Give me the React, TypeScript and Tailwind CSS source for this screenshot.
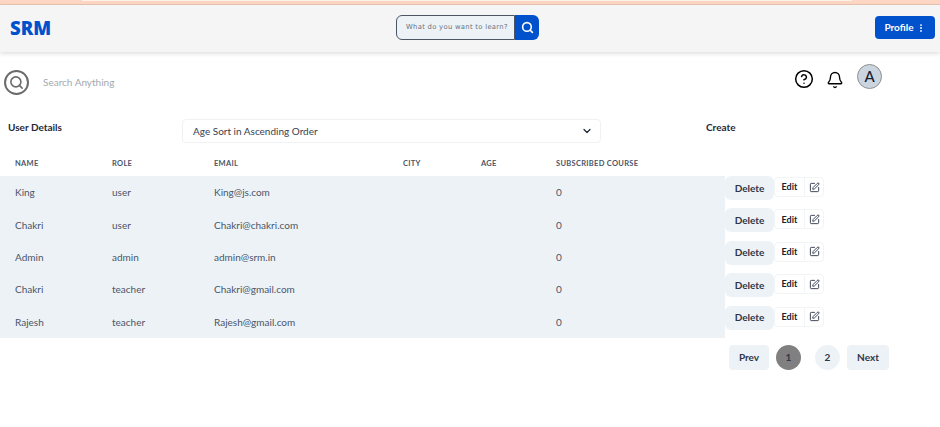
import React from "react";
import { ChevronDown, EllipsisVertical, Search, Bell, CircleHelp, SquarePen } from "lucide-react";

const users = [
    { name: "King", role: "user", email: "King@js.com" },
    { name: "Chakri", role: "user", email: "Chakri@chakri.com" },
    { name: "Admin", role: "admin", email: "admin@srm.in" },
    { name: "Chakri", role: "teacher", email: "Chakri@gmail.com" },
    { name: "Rajesh", role: "teacher", email: "Rajesh@gmail.com" },
];

const cols = "grid grid-cols-[97px_102px_189px_78px_75px_1fr] pl-[15px] items-center";

export default function App() {
    return (
        <div className="w-[940px] h-[427px] overflow-hidden bg-white text-[#374151] font-['Lato',sans-serif]">
            {/* Top stripe */}
            <div className="h-[5px] bg-[#fdd6c3] border-b border-[#eac3b0]">
                <div className="h-[1px] ml-[82px] w-[770px] bg-[#fff0e8]" />
            </div>

            {/* Navbar */}
            <header className="h-[47px] bg-[#f5f5f5] shadow-[0_2px_4px_rgba(0,0,0,0.12)] flex items-center justify-between pl-[10px] pr-[5px]">
                <span className="text-[18.5px] font-extrabold text-[#0052cc] leading-none font-['Open_Sans',sans-serif]">SRM</span>
                <div className="flex h-[25px] ml-[9px] -mt-[2px]">
                    <div className="w-[119px] bg-[#edf2f7] border border-[#4b5563] rounded-l-[6px] flex items-center pl-[9px] text-[6.8px] tracking-[0.3px] text-[#6b7280] font-['DejaVu_Sans',sans-serif] whitespace-nowrap overflow-hidden">
                        What do you want to learn?
                    </div>
                    <div className="w-[24px] bg-[#0052cc] rounded-r-[6px] flex items-center justify-center">
                        <Search size={13} strokeWidth={3} className="text-white" />
                    </div>
                </div>
                <button className="w-[60px] h-[23px] bg-[#0052cc] rounded-[4px] text-white text-[10px] font-bold flex items-center justify-center gap-[2px] -mt-[2px]">
                    Profile
                    <EllipsisVertical size={10} strokeWidth={2.5} />
                </button>
            </header>

            {/* Second bar */}
            <div className="h-[66px] flex pl-[4px] pr-[58px]">
                <div className="flex items-center mt-[-5px]">
                    <div className="w-[25px] h-[25px] rounded-full border-2 border-[#6b6b6b] flex items-center justify-center">
                        <Search size={15} strokeWidth={2.5} className="text-[#6b6b6b]" />
                    </div>
                    <span className="ml-[14px] text-[10px] text-[#a3a8b0]">Search Anything</span>
                </div>
                <div className="ml-auto flex items-start pt-[12px]">
                    <CircleHelp size={20} strokeWidth={1.8} className="text-black mt-[5px]" />
                    <Bell size={18} strokeWidth={1.8} className="text-black ml-[12px] mt-[7px]" />
                    <div className="w-[25px] h-[25px] ml-[13px] rounded-full bg-[#cbd5e0] border border-[#8f8f8f] flex items-center justify-center text-[15px] font-medium text-[#1a202c]">
                        A
                    </div>
                </div>
            </div>

            {/* Toolbar */}
            <div className="flex items-start h-[25px] pl-[8px]">
                <span className="w-[174px] text-[10px] font-bold text-[#1f2937] leading-[18px]">User Details</span>
                <div className="w-[419px] h-[24px] mt-[1px] border border-[#f0f1f3] rounded-[4px] flex items-center justify-between pl-[10px] pr-[7px] text-[10px] text-[#374151]">
                    Age Sort in Ascending Order
                    <ChevronDown size={12} strokeWidth={2.5} className="text-[#1f2937]" />
                </div>
                <span className="ml-[105px] text-[10px] font-bold text-[#1f2937] leading-[18px]">Create</span>
            </div>

            {/* Table */}
            <div className={`${cols} w-[725px] h-[33px] pt-[8px] text-[7.5px] font-bold tracking-[0.3px] text-[#4a5568]`}>
                <span>NAME</span>
                <span>ROLE</span>
                <span>EMAIL</span>
                <span>CITY</span>
                <span>AGE</span>
                <span>SUBSCRIBED COURSE</span>
            </div>
            {users.map((u) => (
                <div key={u.email} className="flex h-[32.4px]">
                    <div className={`${cols} w-[725px] pt-[1px] bg-[#edf2f7] text-[10px] text-[#4a5568]`}>
                        <span>{u.name}</span>
                        <span>{u.role}</span>
                        <span>{u.email}</span>
                        <span />
                        <span />
                        <span>0</span>
                    </div>
                    <div className="flex items-start">
                        <button className="w-[49px] h-[24px] bg-[#edf2f7] rounded-[6px] text-[10px] font-bold text-[#2d3748]">
                            Delete
                        </button>
                        <div className="h-[20px] mt-[1px] flex border border-[#f3f4f6] rounded-[4px] text-[9px] font-bold text-[#1a202c]">
                            <span className="w-[29px] flex items-center justify-center">Edit</span>
                            <span className="w-[19px] border-l border-[#f3f4f6] flex items-center justify-center">
                                <SquarePen size={11} className="text-[#2d3748]" />
                            </span>
                        </div>
                    </div>
                </div>
            ))}

            {/* Pagination */}
            <div className="flex items-center h-[25px] mt-[7px] ml-[729px] text-[10px] font-bold text-[#2d3748]">
                <button className="w-[40px] h-[25px] bg-[#edf2f7] rounded-[4px]">Prev</button>
                <button className="w-[25px] h-[25px] ml-[7px] bg-[#808080] rounded-full">1</button>
                <button className="w-[25px] h-[25px] ml-[14px] bg-[#edf2f7] rounded-full">2</button>
                <button className="w-[42px] h-[25px] ml-[7px] bg-[#edf2f7] rounded-[4px]">Next</button>
            </div>
        </div>
    );
}
